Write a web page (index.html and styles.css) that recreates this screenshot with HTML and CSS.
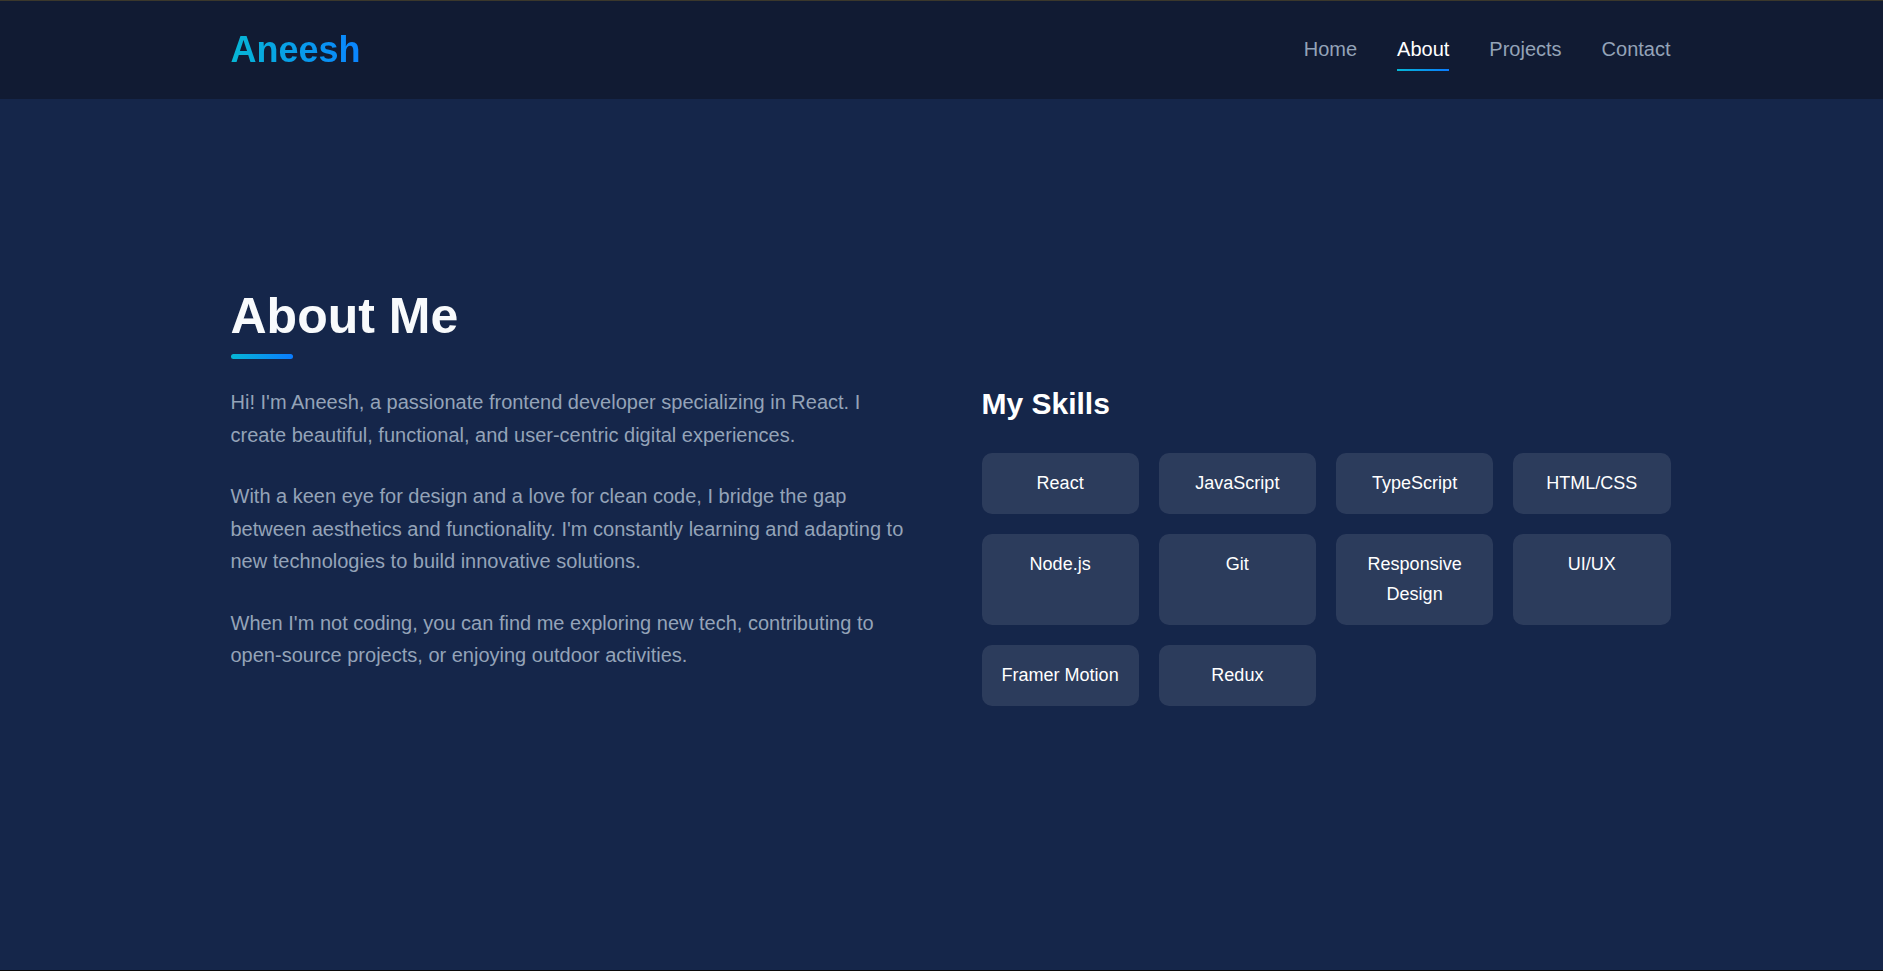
FILE: index.html
```html
<!DOCTYPE html>
<html lang="en">
<head>
<meta charset="utf-8">
<title>Aneesh | About</title>
<link rel="stylesheet" href="styles.css">
</head>
<body>
<div class="app">
  <header class="site-header">
    <div class="shell">
      <div class="container header-inner">
        <a class="logo" href="#">Aneesh</a>
        <nav class="nav">
          <a class="nav-link" href="#">Home</a>
          <a class="nav-link active" href="#">About</a>
          <a class="nav-link" href="#">Projects</a>
          <a class="nav-link" href="#">Contact</a>
        </nav>
      </div>
    </div>
  </header>
  <main class="main">
    <div class="shell">
      <section class="container about">
        <h1 class="title">About Me</h1>
        <div class="title-bar"></div>
        <div class="about-grid">
          <div class="about-text">
            <p>Hi! I'm Aneesh, a passionate frontend developer specializing in React. I create beautiful, functional, and user-centric digital experiences.</p>
            <p>With a keen eye for design and a love for clean code, I bridge the gap between aesthetics and functionality. I'm constantly learning and adapting to new technologies to build innovative solutions.</p>
            <p>When I'm not coding, you can find me exploring new tech, contributing to open-source projects, or enjoying outdoor activities.</p>
          </div>
          <div class="skills">
            <h2 class="skills-title">My Skills</h2>
            <div class="skills-grid">
              <div class="skill">React</div>
              <div class="skill">JavaScript</div>
              <div class="skill">TypeScript</div>
              <div class="skill">HTML/CSS</div>
              <div class="skill">Node.js</div>
              <div class="skill">Git</div>
              <div class="skill">Responsive Design</div>
              <div class="skill">UI/UX</div>
              <div class="skill">Framer Motion</div>
              <div class="skill">Redux</div>
            </div>
          </div>
        </div>
      </section>
    </div>
  </main>
</div>
</body>
</html>
```

FILE: styles.css
```css
* { box-sizing: border-box; }

html, body {
  margin: 0;
  padding: 0;
  height: 100%;
}

body {
  font-family: "Liberation Sans", Arial, sans-serif;
  background: #15264a;
  color: #f8fafc;
}

.app {
  min-height: 100vh;
  display: flex;
  flex-direction: column;
  border-top: 1px solid #3b382c;
  border-bottom: 1px solid #0a0a0a;
  background: #15264a;
}

.shell {
  padding-left: 18px;
}

.container {
  max-width: 1440px;
  margin: 0 auto;
}

.site-header {
  background: #111b33;
  padding: 29px 0 29px;
}

.header-inner {
  display: flex;
  align-items: center;
  justify-content: space-between;
}

.logo {
  font-size: 36px;
  line-height: 40px;
  font-weight: 700;
  text-decoration: none;
  background: linear-gradient(90deg, #06b6d4, #0a84ff);
  -webkit-background-clip: text;
  background-clip: text;
  color: transparent;
}

.nav {
  display: flex;
  gap: 40px;
  align-items: center;
  margin-bottom: 2px;
}

.nav-link {
  position: relative;
  font-size: 20px;
  line-height: 28px;
  color: #94a3b8;
  text-decoration: none;
}

.nav-link.active {
  color: #ffffff;
}

.nav-link.active::after {
  content: "";
  position: absolute;
  left: 0;
  right: 0;
  bottom: -8px;
  height: 2px;
  background: linear-gradient(90deg, #06b6d4, #0a7cff);
}

.main {
  flex: 1;
  background: #15264a;
}

.about {
  padding-top: 187px;
}

.title {
  margin: 0 0 8px;
  font-size: 50px;
  line-height: 60px;
  font-weight: 700;
  color: #f8fafc;
}

.title-bar {
  width: 62px;
  height: 5px;
  border-radius: 3px;
  background: linear-gradient(90deg, #06b6d4, #0a7cff);
  margin-bottom: 27px;
}

.about-grid {
  display: grid;
  grid-template-columns: 1fr 1fr;
  gap: 62px;
  align-items: start;
}

.about-text p {
  margin: 0 0 29px;
  font-size: 20px;
  line-height: 1.625;
  color: #94a3b8;
}

.about-text p:last-child {
  margin-bottom: 0;
}

.skills-title {
  margin: 0 0 31px;
  font-size: 30px;
  line-height: 36px;
  font-weight: 700;
  color: #ffffff;
}

.skills-grid {
  display: grid;
  grid-template-columns: repeat(4, 1fr);
  gap: 20px;
}

.skill {
  background: rgba(255, 255, 255, 0.1);
  border-radius: 10px;
  padding: 16px;
  text-align: center;
  font-size: 18px;
  line-height: 1.625;
  color: #ffffff;
}
```
